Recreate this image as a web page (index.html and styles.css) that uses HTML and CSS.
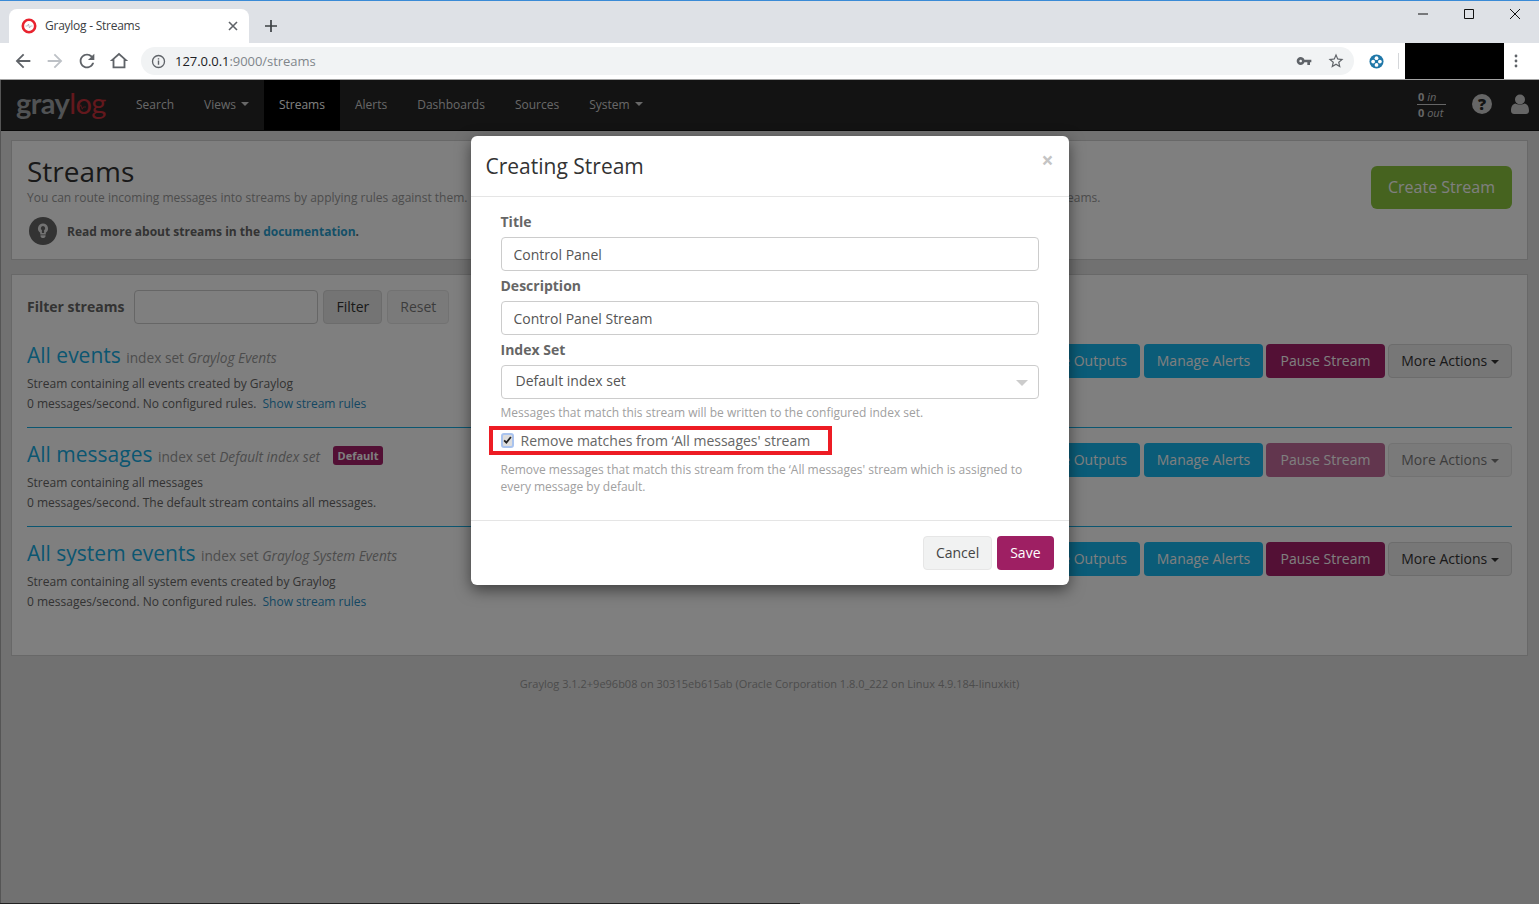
FILE: index.html
```html
<!DOCTYPE html>
<html lang="en">
<head>
    <meta charset="UTF-8">
    <title>Graylog - Streams</title>
    <link rel="stylesheet" href="styles.css">
</head>
<body>
    <header class="chrome">
        <div class="tabstrip">
            <div class="tab">
                <svg class="favicon" viewBox="0 0 16 16" width="16" height="16">
                    <circle cx="8" cy="8" r="6.2" fill="#fff" stroke="#e8232f" stroke-width="2.6"/>
                    <path d="M4.5 8h2l1-2 1 4 1-2h2" fill="none" stroke="#aab" stroke-width="0.8"/>
                </svg>
                <span class="tab-title">Graylog - Streams</span>
                <svg class="tab-close" viewBox="0 0 10 10" width="10" height="10"><path d="M1 1l8 8M9 1l-8 8" stroke="#5f6368" stroke-width="1.6"/></svg>
            </div>
            <svg class="new-tab" viewBox="0 0 12 12" width="12" height="12"><path d="M6 0v12M0 6h12" stroke="#3c4043" stroke-width="1.7"/></svg>
            <div class="window-controls">
                <svg viewBox="0 0 10 10" width="10" height="10"><path d="M0 5h10" stroke="#111" stroke-width="1"/></svg>
                <svg viewBox="0 0 10 10" width="10" height="10"><path d="M.5.5h9v9h-9z" fill="none" stroke="#111" stroke-width="1"/></svg>
                <svg viewBox="0 0 10 10" width="10" height="10"><path d="M0 0l10 10M10 0L0 10" stroke="#111" stroke-width="1"/></svg>
            </div>
        </div>
        <div class="toolbar">
            <svg class="tool" viewBox="0 0 24 24" width="22" height="22"><path fill="#5f6368" d="M20 11H7.83l5.59-5.59L12 4l-8 8 8 8 1.41-1.41L7.83 13H20v-2z"/></svg>
            <svg class="tool" viewBox="0 0 24 24" width="22" height="22"><path fill="#bdc1c6" d="M12 4l-1.41 1.41L16.17 11H4v2h12.17l-5.58 5.59L12 20l8-8z"/></svg>
            <svg class="tool" viewBox="0 0 24 24" width="22" height="22"><path fill="#5f6368" d="M17.65 6.35A7.958 7.958 0 0 0 12 4c-4.42 0-7.99 3.58-7.99 8s3.57 8 7.99 8c3.73 0 6.84-2.55 7.73-6h-2.08A5.99 5.99 0 0 1 12 18c-3.31 0-6-2.69-6-6s2.69-6 6-6c1.66 0 3.14.69 4.22 1.78L13 11h7V4l-2.35 2.35z"/></svg>
            <svg class="tool" viewBox="0 0 24 24" width="22" height="22"><path fill="#5f6368" fill-rule="evenodd" d="M12 5.69l5 4.5V18H7v-7.81l5-4.5M12 3L2 12h3v8h14v-8h3L12 3z"/></svg>
            <div class="omnibox">
                <svg viewBox="0 0 16 16" width="15" height="15">
                    <circle cx="8" cy="8" r="6.4" fill="none" stroke="#5f6368" stroke-width="1.4"/>
                    <path d="M8 7v4.4M8 4.4v1.5" stroke="#5f6368" stroke-width="1.5"/>
                </svg>
                <span class="url"><span class="url-host">127.0.0.1</span>:9000/streams</span>
                <svg class="omni-key" viewBox="0 0 24 24" width="16" height="16"><path fill="#5f6368" d="M12.65 10C11.83 7.67 9.61 6 7 6c-3.31 0-6 2.69-6 6s2.69 6 6 6c2.61 0 4.83-1.67 5.65-4H17v4h4v-4h2v-4H12.65zM7 14c-1.1 0-2-.9-2-2s.9-2 2-2 2 .9 2 2-.9 2-2 2z"/></svg>
                <svg class="omni-star" viewBox="0 0 24 24" width="18" height="18"><path fill="#5f6368" d="M22 9.24l-7.19-.62L12 2 9.19 8.63 2 9.24l5.46 4.73L5.82 21 12 17.27 18.18 21l-1.63-7.03L22 9.24zM12 15.4l-3.76 2.27 1-4.28-3.32-2.88 4.38-.38L12 6.1l1.71 4.04 4.38.38-3.32 2.88 1 4.28L12 15.4z"/></svg>
            </div>
            <svg class="ext" viewBox="0 0 16 16" width="15" height="15">
                <circle cx="8" cy="8" r="7.5" fill="#1f77a8"/>
                <circle cx="8" cy="4.4" r="2" fill="#fff"/><circle cx="8" cy="11.6" r="2" fill="#fff"/>
                <circle cx="4.4" cy="8" r="2" fill="#fff"/><circle cx="11.6" cy="8" r="2" fill="#fff"/>
            </svg>
            <div class="tool-sep"></div>
            <div class="profile-block"></div>
            <svg class="kebab" viewBox="0 0 4 14" width="4" height="14">
                <circle cx="2" cy="2" r="1.4" fill="#5f6368"/><circle cx="2" cy="7" r="1.4" fill="#5f6368"/><circle cx="2" cy="12" r="1.4" fill="#5f6368"/>
            </svg>
        </div>
    </header>

    <div class="app">
        <nav class="navbar">
            <div class="brand">
                <span class="brand-gray">gray</span><span class="brand-red">log</span>
                <svg class="brand-pulse" viewBox="0 0 12 8" width="9" height="6"><path d="M0 4h3.500l1.500-3 2 6 1.500-3H12" fill="none" stroke="#c6303a" stroke-width="1"/></svg>
            </div>
            <a class="nav-item">Search</a>
            <a class="nav-item">Views <i class="caret"></i></a>
            <a class="nav-item active">Streams</a>
            <a class="nav-item">Alerts</a>
            <a class="nav-item">Dashboards</a>
            <a class="nav-item">Sources</a>
            <a class="nav-item">System <i class="caret"></i></a>
            <div class="nav-right">
                <div class="throughput">
                    <div class="tp-in"><b>0</b> <em>in</em></div>
                    <div class="tp-out"><b>0</b> <em>out</em></div>
                </div>
                <span class="help-icon">?</span>
                <svg class="user-icon" viewBox="0 0 18 20" width="18" height="20">
                    <circle cx="9" cy="5.500" r="5"/>
                    <path d="M0 17c0-5 2-7 4.500-7.500C6 11 12 11 13.500 9.500 16 10 18 12 18 17c0 2-1.500 3-3 3H3c-1.500 0-3-1-3-3z"/>
                </svg>
            </div>
        </nav>

        <main class="content">
            <section class="panel page-header">
                <div class="header-text">
                    <h1>Streams</h1>
                    <p class="lead">You can route incoming messages into streams by applying rules against them. If a message matches the rules of a stream it is routed here. A message can also be routed into multiple streams.</p>
                    <p class="doc-hint">
                        <span class="bulb">
                            <svg viewBox="0 0 12 16" width="12" height="16">
                                <path fill="#e6e6e6" fill-rule="evenodd" d="M6 .5a5 5 0 0 0-2.800 9.150V11.500h5.600V9.650A5 5 0 0 0 6 .5zM6 3a2.200 2.200 0 0 1 1.100 4.100V10H4.900V7.100A2.200 2.200 0 0 1 6 3zM3.500 12.300h5v1.200L7.200 15H4.800L3.500 13.500z"/>
                            </svg>
                        </span>
                        <b>Read more about streams in the <a>documentation</a>.</b>
                    </p>
                </div>
                <button class="btn btn-success btn-lg">Create Stream</button>
            </section>

            <section class="panel stream-panel">
                <form class="filter-row">
                    <label>Filter streams</label>
                    <input class="filter-input" type="text">
                    <button type="button" class="btn btn-default btn-filter">Filter</button>
                    <button type="button" class="btn btn-default disabled">Reset</button>
                </form>

                <ul class="stream-list">
                    <li class="stream">
                        <div class="stream-info">
                            <h2><a>All events</a> <small>index set <em>Graylog Events</em></small></h2>
                            <div>Stream containing all events created by Graylog</div>
                            <div>0 messages/second. No configured rules. <a class="rules-link">Show stream rules</a></div>
                        </div>
                        <div class="stream-actions">
                            <button class="btn btn-info btn-outputs">Manage Outputs</button>
                            <button class="btn btn-info btn-fixed">Manage Alerts</button>
                            <button class="btn btn-primary btn-fixed">Pause Stream</button>
                            <button class="btn btn-default btn-more">More Actions <i class="caret"></i></button>
                        </div>
                    </li>
                    <li class="stream">
                        <div class="stream-info">
                            <h2><a>All messages</a> <small>index set <em>Default index set</em></small> <span class="label-default">Default</span></h2>
                            <div>Stream containing all messages</div>
                            <div>0 messages/second. The default stream contains all messages.</div>
                        </div>
                        <div class="stream-actions">
                            <button class="btn btn-info btn-outputs">Manage Outputs</button>
                            <button class="btn btn-info btn-fixed">Manage Alerts</button>
                            <button class="btn btn-primary btn-fixed disabled">Pause Stream</button>
                            <button class="btn btn-default btn-more disabled">More Actions <i class="caret"></i></button>
                        </div>
                    </li>
                    <li class="stream">
                        <div class="stream-info">
                            <h2><a>All system events</a> <small>index set <em>Graylog System Events</em></small></h2>
                            <div>Stream containing all system events created by Graylog</div>
                            <div>0 messages/second. No configured rules. <a class="rules-link">Show stream rules</a></div>
                        </div>
                        <div class="stream-actions">
                            <button class="btn btn-info btn-outputs">Manage Outputs</button>
                            <button class="btn btn-info btn-fixed">Manage Alerts</button>
                            <button class="btn btn-primary btn-fixed">Pause Stream</button>
                            <button class="btn btn-default btn-more">More Actions <i class="caret"></i></button>
                        </div>
                    </li>
                </ul>
            </section>

            <footer class="page-footer">Graylog 3.1.2+9e96b08 on 30315eb615ab (Oracle Corporation 1.8.0_222 on Linux 4.9.184-linuxkit)</footer>
        </main>

        <div class="backdrop">
            <div class="modal">
                <div class="modal-header">
                    <h3>Creating Stream</h3>
                    <span class="modal-close">×</span>
                </div>
                <div class="modal-body">
                    <label class="field-label">Title</label>
                    <input class="field-input" type="text" value="Control Panel">
                    <label class="field-label">Description</label>
                    <input class="field-input" type="text" value="Control Panel Stream">
                    <label class="field-label">Index Set</label>
                    <div class="select-box">Default index set<i class="select-arrow"></i></div>
                    <p class="help-text">Messages that match this stream will be written to the configured index set.</p>
                    <div class="check-row">
                        <span class="check-box">
                            <svg viewBox="0 0 12 12" width="10" height="10"><path d="M1.500 6.500l3 3 6-7.500" fill="none" stroke="#222" stroke-width="2.400"/></svg>
                        </span>
                        <span>Remove matches from ‘All messages' stream</span>
                        <span class="highlight"></span>
                    </div>
                    <p class="help-text help-check">Remove messages that match this stream from the ‘All messages' stream which is assigned to every message by default.</p>
                </div>
                <div class="modal-footer">
                    <button class="btn btn-cancel">Cancel</button>
                    <button class="btn btn-save">Save</button>
                </div>
            </div>
        </div>
    </div>
    <div class="taskbar-edge"></div>
</body>
</html>
```

FILE: styles.css
```css
* {
    box-sizing: border-box;
}

html, body {
    height: 100%;
}

body {
    margin: 0;
    position: relative;
    display: flex;
    flex-direction: column;
    overflow: hidden;
    font-family: 'Open Sans', sans-serif;
    font-size: 12px;
    background-color: #e3e3e3;
}

/* browser frame */
.chrome {
    flex: none;
    height: 80px;
    border-bottom: 1px solid #a3a3a3;
    background-color: #fff;
}

.tabstrip {
    height: 43px;
    padding-left: 9px;
    display: flex;
    align-items: flex-end;
    background-color: #dee1e6;
    border-top: 1px solid #3a8ad6;
}

.tab {
    width: 240px;
    height: 34px;
    padding: 0 11px 1px 12px;
    display: flex;
    align-items: center;
    background-color: #fff;
    border-radius: 8px 8px 0 0;
    font-size: 12px;
    color: #3c4043;
}

.tab-title {
    margin-left: 8px;
    flex: 1;
    letter-spacing: -0.25px;
}

.new-tab {
    margin: 0 0 11px 16px;
}

.window-controls {
    margin-left: auto;
    align-self: flex-start;
    display: flex;
    gap: 36px;
    padding: 8px 19px 0 0;
}

.toolbar {
    height: 36px;
    padding-left: 12px;
    display: flex;
    align-items: center;
    background-color: #fff;
}

.tool {
    margin-right: 10px;
}

.omnibox {
    width: 1213px;
    height: 28px;
    margin-left: 1px;
    padding: 0 9px 0 10px;
    display: flex;
    align-items: center;
    background-color: #f1f3f4;
    border-radius: 14px;
}

.url {
    margin-left: 9px;
    flex: 1;
    font-size: 13px;
    letter-spacing: -0.05px;
    color: #80868b;
}

.url-host {
    color: #202124;
}

.omni-key {
    margin-right: 15px;
}

.ext {
    margin-left: 15px;
}

.tool-sep {
    width: 1px;
    height: 16px;
    margin-left: 14px;
    background-color: #d5d7da;
}

.profile-block {
    width: 99px;
    height: 36px;
    margin-left: 6px;
    background-color: #000;
}

.kebab {
    margin-left: 10px;
}

/* graylog app */
.app {
    flex: 1;
    position: relative;
    display: flex;
    flex-direction: column;
    border-left: 1px solid #555;
}

.navbar {
    height: 51px;
    flex: none;
    display: flex;
    align-items: stretch;
    background-color: #262626;
    border-bottom: 1px solid #111;
}

.brand {
    position: relative;
    width: 120px;
    padding: 2px 0 0 15px;
    font-family: 'Lato', sans-serif;
    font-size: 29px;
    font-weight: 700;
    letter-spacing: -0.6px;
    line-height: 42px;
}

.brand-gray {
    color: #a0a4a8;
}

.brand-red {
    color: #c6303a;
    font-weight: 400;
}

.brand-pulse {
    position: absolute;
    left: 76px;
    top: 24px;
}

.nav-item {
    padding: 0 15px 2px;
    display: flex;
    align-items: center;
    gap: 5px;
    color: #d0d0d0;
}

.nav-item.active {
    background-color: #000;
    color: #fff;
}

.caret {
    display: inline-block;
    width: 0;
    height: 0;
    border-top: 4px solid;
    border-left: 4px solid transparent;
    border-right: 4px solid transparent;
    vertical-align: middle;
}

.nav-right {
    margin-left: auto;
    display: flex;
    align-items: center;
    padding: 0 10px 3px 0;
}

.throughput {
    width: 29px;
    margin: 2px 26px 0 0;
    font-size: 11px;
    line-height: 15px;
    color: #ccc;
}

.tp-in {
    border-bottom: 1px solid #ccc;
    padding-left: 1px;
}

.tp-out {
    padding-left: 1px;
}

.help-icon {
    width: 20px;
    height: 20px;
    margin-right: 19px;
    border-radius: 50%;
    background-color: #ccc;
    color: #262626;
    font-size: 16px;
    font-weight: 800;
    line-height: 20px;
    text-align: center;
}

.user-icon path, .user-icon circle {
    fill: #ccc;
}

.content {
    flex: 1;
    padding: 9px 11px 0 10px;
}

.panel {
    background-color: #fff;
    border: 1px solid #d1d1d1;
}

.page-header {
    height: 120px;
    padding: 14px 15px 15px;
    display: flex;
    justify-content: space-between;
    align-items: flex-start;
}

.header-text {
    min-width: 0;
    width: 1200px;
    flex: none;
}

h1 {
    margin: 0;
    font-size: 28px;
    font-weight: 400;
    line-height: 32px;
    color: #333;
}

.lead {
    margin: 2px 0 0;
    color: #999;
    line-height: 18px;
    white-space: nowrap;
}

.doc-hint {
    margin: 10px 0 0 2px;
    display: flex;
    align-items: center;
    gap: 10px;
    color: #666;
}

.bulb {
    width: 28px;
    height: 28px;
    display: flex;
    align-items: center;
    justify-content: center;
    border-radius: 50%;
    background-color: #666;
}

.doc-hint a {
    color: #2a9fcf;
}

.btn {
    height: 34px;
    padding: 0 12px 2px;
    font-family: inherit;
    font-size: 14px;
    border: 1px solid transparent;
    border-radius: 4px;
    cursor: pointer;
    white-space: nowrap;
}

.btn.disabled {
    opacity: 0.65;
}

.btn-lg {
    height: 43px;
    margin-top: 11px;
    padding: 0 16px 2px;
    font-size: 16px;
    border-radius: 6px;
}

.btn-success {
    background-color: #8dc63f;
    color: #fff;
}

.btn-info {
    background-color: #17b8f0;
    color: #fff;
}

.btn-primary {
    background-color: #a6206a;
    color: #fff;
}

.btn-default {
    background-color: #efefef;
    border-color: #d8d8d8;
    color: #333;
}

.btn-filter {
    background-color: #e8e8e8;
}

.btn-outputs {
    margin-right: 1px;
}

.btn-fixed {
    width: 119px;
    padding-left: 0;
    padding-right: 0;
}

.btn-more {
    width: 124px;
    padding-left: 0;
    padding-right: 0;
}

.stream-panel {
    height: 382px;
    margin-top: 14px;
    padding: 15px;
}

.filter-row {
    display: flex;
    align-items: center;
    gap: 5px;
    margin-bottom: 5px;
}

.filter-row label {
    margin: 0 5px 2px 0;
    font-size: 14px;
    font-weight: 700;
    color: #666;
}

.filter-input {
    width: 184px;
    height: 34px;
    background-color: #fff;
    border: 1px solid #ccc;
    border-radius: 4px;
}

.stream-list {
    list-style-type: none;
    margin: 0;
    padding: 0;
}

.stream {
    height: 99px;
    padding-top: 15px;
    display: flex;
    justify-content: space-between;
    border-bottom: 1px solid #16ace3;
    color: #666;
    line-height: 20px;
}

.stream:last-child {
    border-bottom: none;
}

h2 {
    margin: 0;
    height: 30px;
    font-size: 21px;
    font-weight: 400;
    line-height: 23px;
    color: #16ace3;
}

h2 small {
    font-size: 13.700px;
    color: #999;
}

.rules-link {
    margin-left: 3px;
    color: #2a8fc5;
}

.label-default {
    margin-left: 7px;
    padding: 2px 5px;
    font-size: 11px;
    font-weight: 700;
    color: #fff;
    background-color: #a6206a;
    border-radius: 3px;
    vertical-align: 2px;
}

.stream-actions {
    display: flex;
    gap: 3px;
    align-items: flex-start;
}

.page-footer {
    margin-top: 20px;
    text-align: center;
    font-size: 11px;
    color: #999;
}

/* modal */
.backdrop {
    position: absolute;
    inset: 0;
    display: flex;
    justify-content: center;
    align-items: flex-start;
    background-color: rgba(0, 0, 0, 0.5);
}

.modal {
    width: 598px;
    margin-top: 56px;
    margin-right: 1px;
    background-color: #fff;
    border-radius: 6px;
    box-shadow: 0 5px 15px rgba(0, 0, 0, 0.5);
}

.modal-header {
    height: 61px;
    padding: 15px;
    display: flex;
    justify-content: space-between;
    border-bottom: 1px solid #e5e5e5;
}

h3 {
    margin: 0;
    font-size: 21px;
    font-weight: 400;
    line-height: 30px;
    color: #333;
}

.modal-close {
    margin-top: -6px;
    margin-left: auto;
    font-size: 21px;
    font-weight: 700;
    line-height: 30px;
    color: #c4c4c4;
}

.modal-body {
    height: 323px;
    padding: 15px 30px;
}

.field-label {
    display: block;
    height: 25px;
    font-size: 14px;
    font-weight: 700;
    line-height: 20px;
    color: #666;
}

.field-input {
    display: block;
    width: 100%;
    height: 34px;
    margin-bottom: 5px;
    padding: 0 12px;
    font-family: inherit;
    font-size: 14px;
    color: #555;
    background-color: #fff;
    border: 1px solid #ccc;
    border-radius: 4px;
}

.select-box {
    position: relative;
    height: 34px;
    padding: 0 14px;
    font-size: 14px;
    line-height: 30px;
    color: #555;
    border: 1px solid #ccc;
    border-radius: 4px;
}

.select-arrow {
    position: absolute;
    right: 10px;
    top: 14px;
    border-top: 6px solid #ccc;
    border-left: 6px solid transparent;
    border-right: 6px solid transparent;
}

.help-text {
    margin: 5px 0 0;
    line-height: 17px;
    color: #a0a0a0;
}

.check-row {
    position: relative;
    height: 20px;
    margin-top: 9px;
    display: flex;
    align-items: center;
    gap: 7px;
    font-size: 14px;
    color: #666;
}

.check-box {
    width: 13px;
    height: 15px;
    display: flex;
    align-items: center;
    justify-content: center;
    background-color: #ddd;
    border: 2px solid #a9c3ee;
    border-radius: 3px;
}

/* red annotation over the screenshot */
.highlight {
    position: absolute;
    left: -12px;
    top: -4px;
    width: 343px;
    height: 29px;
    border: 4px solid #ed1c24;
}

.help-check {
    margin-top: 11px;
}

.modal-footer {
    height: 65px;
    padding: 15px;
    display: flex;
    justify-content: flex-end;
    gap: 5px;
    border-top: 1px solid #e5e5e5;
}

.btn-cancel {
    background-color: #f1f2f2;
    border-color: #e6e6e6;
    color: #444;
}

.btn-save {
    background-color: #9e1f63;
    color: #fff;
}

.taskbar-edge {
    position: absolute;
    left: 0;
    bottom: 0;
    width: 800px;
    height: 1px;
    background-color: #222;
}
```
